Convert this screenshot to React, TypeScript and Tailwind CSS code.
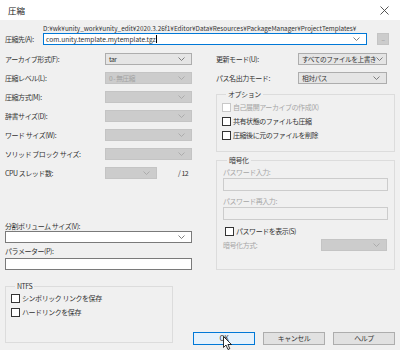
import React from 'react';

const font = { fontFamily: '"Noto Sans CJK JP", "Noto Sans", sans-serif' };

const Chevron = ({ disabled }: { disabled?: boolean }) => (
	<svg width="7" height="4" viewBox="0 0 7 4" className="shrink-0">
		<path d="M0.5 0.5 L3.5 3.5 L6.5 0.5" fill="none" stroke={disabled ? '#a8a8a8' : '#707070'} strokeWidth="0.9" />
	</svg>
);

const Combo = ({ value, disabled, className }: { value?: string; disabled?: boolean; className: string }) => (
	<div
		className={
			'h-[12px] flex items-center justify-between pl-[3px] pr-[6px] border text-[6.7px] leading-none whitespace-nowrap ' +
			(disabled ? 'bg-[#cccccc] border-[#c4c4c4] text-[#a2a2a2] ' : 'bg-[#e5e5e5] border-[#adadad] text-[#333] ') +
			className
		}
	>
		<span>{value}</span>
		<Chevron disabled={disabled} />
	</div>
);

const Check = ({ label, disabled }: { label: string; disabled?: boolean }) => (
	<div className="h-[10px] flex items-center gap-[2px] whitespace-nowrap">
		<div className={'w-[9px] h-[9px] border bg-white shrink-0 ' + (disabled ? 'border-[#c8c8c8]' : 'border-[#333]')} />
		<span className={'leading-[10px] ' + (disabled ? 'text-[#a6a6a6]' : 'text-[#333]')}>{label}</span>
	</div>
);

const Row = ({ label, children, labelClass }: { label: string; children: React.ReactNode; labelClass: string }) => (
	<div className="h-[12px] flex items-center">
		<div className={'whitespace-nowrap ' + labelClass}>{label}</div>
		{children}
	</div>
);

const Group = ({ title, className, children }: { title: string; className: string; children: React.ReactNode }) => (
	<fieldset className={'border border-[#dcdcdc] ' + className}>
		<legend className="ml-[4px] px-[2px] h-[10px] leading-[10px] text-[#333]">{title}</legend>
		{children}
	</fieldset>
);

const Button = ({ label, primary }: { label: string; primary?: boolean }) => (
	<div
		className={
			'w-[62px] h-[13px] border flex items-center justify-center leading-none text-[#333] ' +
			(primary ? 'bg-[#e5f1fb] border-[#0078d7]' : 'bg-[#e1e1e1] border-[#adadad]')
		}
	>
		{label}
	</div>
);

const Cursor = () => (
	<svg width="10" height="15" viewBox="0 0 10 15" className="absolute left-[223px] top-[336px]">
		<path d="M0.5 0.5 L0.5 11.5 L3 9 L5 13.5 L6.8 12.7 L4.9 8.5 L8.5 8.5 Z" fill="white" stroke="black" strokeWidth="0.8" />
	</svg>
);

const App = () => {
	return (
		<div
			className="w-[400px] h-[350px] bg-[#f0f0f0] flex flex-col overflow-hidden relative text-[7px] tracking-[-0.45px] leading-[10px] text-[#333]"
			style={font}
		>
			<div className="h-[20px] bg-white flex items-center justify-between pl-[8px] pr-[11px] shrink-0 tracking-normal">
				<span className="text-[8.5px] text-[#222]">圧縮</span>
				<svg width="9" height="9" viewBox="0 0 9 9">
					<path d="M0.5 0.5 L8.5 8.5 M8.5 0.5 L0.5 8.5" stroke="#444" strokeWidth="0.9" />
				</svg>
			</div>

			<div className="px-[5px] flex flex-col">
				<div className="mt-[4px] pl-[38px] h-[9px] leading-[9px] text-[6.4px] tracking-normal whitespace-nowrap text-[#333]">
					D:¥wk¥unity_work¥unity_edit¥2020.3.26f1¥Editor¥Data¥Resources¥PackageManager¥ProjectTemplates¥
				</div>
				<div className="h-[12px] flex items-center">
					<div className="w-[38px] whitespace-nowrap">圧縮先(A):</div>
					<div className="w-[324px] h-[12px] bg-white border border-[#0078d7] flex items-center justify-between pl-[2px] pr-[6px] text-[6.6px] tracking-normal leading-none">
						<span className="flex items-center">
							com.unity.template.mytemplate.tgz
							<span className="w-px h-[8px] bg-black" />
						</span>
						<Chevron />
					</div>
					<div className="ml-[10px] w-[12px] h-[12px] bg-[#cccccc] border border-[#c4c4c4] flex items-end justify-center pb-[3px] text-[5px] text-[#999] leading-none">
						...
					</div>
				</div>

				<div className="mt-[8px] flex">
					<div className="w-[187px] flex flex-col">
						<div className="flex flex-col gap-[7px]">
							<Row label="アーカイブ形式(F):" labelClass="w-[100px]">
								<Combo value="tar" className="w-[87px]" />
							</Row>
							<Row label="圧縮レベル(L):" labelClass="w-[100px]">
								<Combo value="0 - 無圧縮" disabled className="w-[87px]" />
							</Row>
							<Row label="圧縮方式(M):" labelClass="w-[100px]">
								<Combo disabled className="w-[87px]" />
							</Row>
							<Row label="辞書サイズ(D):" labelClass="w-[100px]">
								<Combo disabled className="w-[87px]" />
							</Row>
							<Row label="ワード サイズ(W):" labelClass="w-[100px]">
								<Combo disabled className="w-[87px]" />
							</Row>
							<Row label="ソリッド ブロック サイズ:" labelClass="w-[100px]">
								<Combo disabled className="w-[87px]" />
							</Row>
							<Row label="CPU スレッド数:" labelClass="w-[100px]">
								<Combo disabled className="w-[52px]" />
								<span className="ml-[21px] whitespace-nowrap">/ 12</span>
							</Row>
						</div>
						<div className="mt-[42px] h-[10px]">分割ボリューム サイズ(V):</div>
						<div className="h-[12px] bg-white border border-[#7a7a7a] flex items-center justify-end pr-[6px]">
							<Chevron />
						</div>
						<div className="mt-[3px] h-[10px]">パラメーター(P):</div>
						<div className="mt-[2px] h-[12px] bg-white border border-[#7a7a7a]" />
					</div>

					<div className="ml-[24px] flex-1 flex flex-col">
						<div className="flex flex-col gap-[7px]">
							<Row label="更新モード(U):" labelClass="w-[82px]">
								<Combo value="すべてのファイルを上書き" className="w-[89px]" />
							</Row>
							<Row label="パス名出力モード:" labelClass="w-[82px]">
								<Combo value="相対パス" className="w-[89px]" />
							</Row>
						</div>
						<Group title="オプション" className="mt-[5px] pl-[5px] pb-[11px]">
							<div className="mt-[3px] flex flex-col gap-[4px]">
								<Check label="自己展開アーカイブの作成(X)" disabled />
								<Check label="共有状態のファイルも圧縮" />
								<Check label="圧縮後に元のファイルを削除" />
							</div>
						</Group>
						<Group title="暗号化" className="mt-[3px] pl-[6px] pr-[6px] pb-[18px]">
							<div className="mt-[2px] h-[10px] text-[#a6a6a6]">パスワード入力:</div>
							<div className="mt-[1px] h-[13px] bg-[#f0f0f0] border border-[#cccccc]" />
							<div className="mt-[5px] h-[10px] text-[#a6a6a6]">パスワード再入力:</div>
							<div className="mt-[1px] h-[13px] bg-[#f0f0f0] border border-[#cccccc]" />
							<div className="mt-[6px] pl-[2px]">
								<Check label="パスワードを表示(S)" />
							</div>
							<div className="mt-[3px]">
								<Row label="暗号化方式:" labelClass="w-[98px] text-[#a6a6a6]">
									<Combo disabled className="w-[66px]" />
								</Row>
							</div>
						</Group>
					</div>
				</div>

				<div className="flex items-start mt-[11px]">
					<Group title="NTFS" className="w-[168px] h-[62px] pl-[5px]">
						<div className="mt-[2px] flex flex-col gap-[4px]">
							<Check label="シンボリック リンクを保存" />
							<Check label="ハードリンクを保存" />
						</div>
					</Group>
					<div className="ml-auto mt-[51px] flex gap-[8px]">
						<Button label="OK" primary />
						<Button label="キャンセル" />
						<Button label="ヘルプ" />
					</div>
				</div>
			</div>
			<Cursor />
		</div>
	);
};

export default App;
